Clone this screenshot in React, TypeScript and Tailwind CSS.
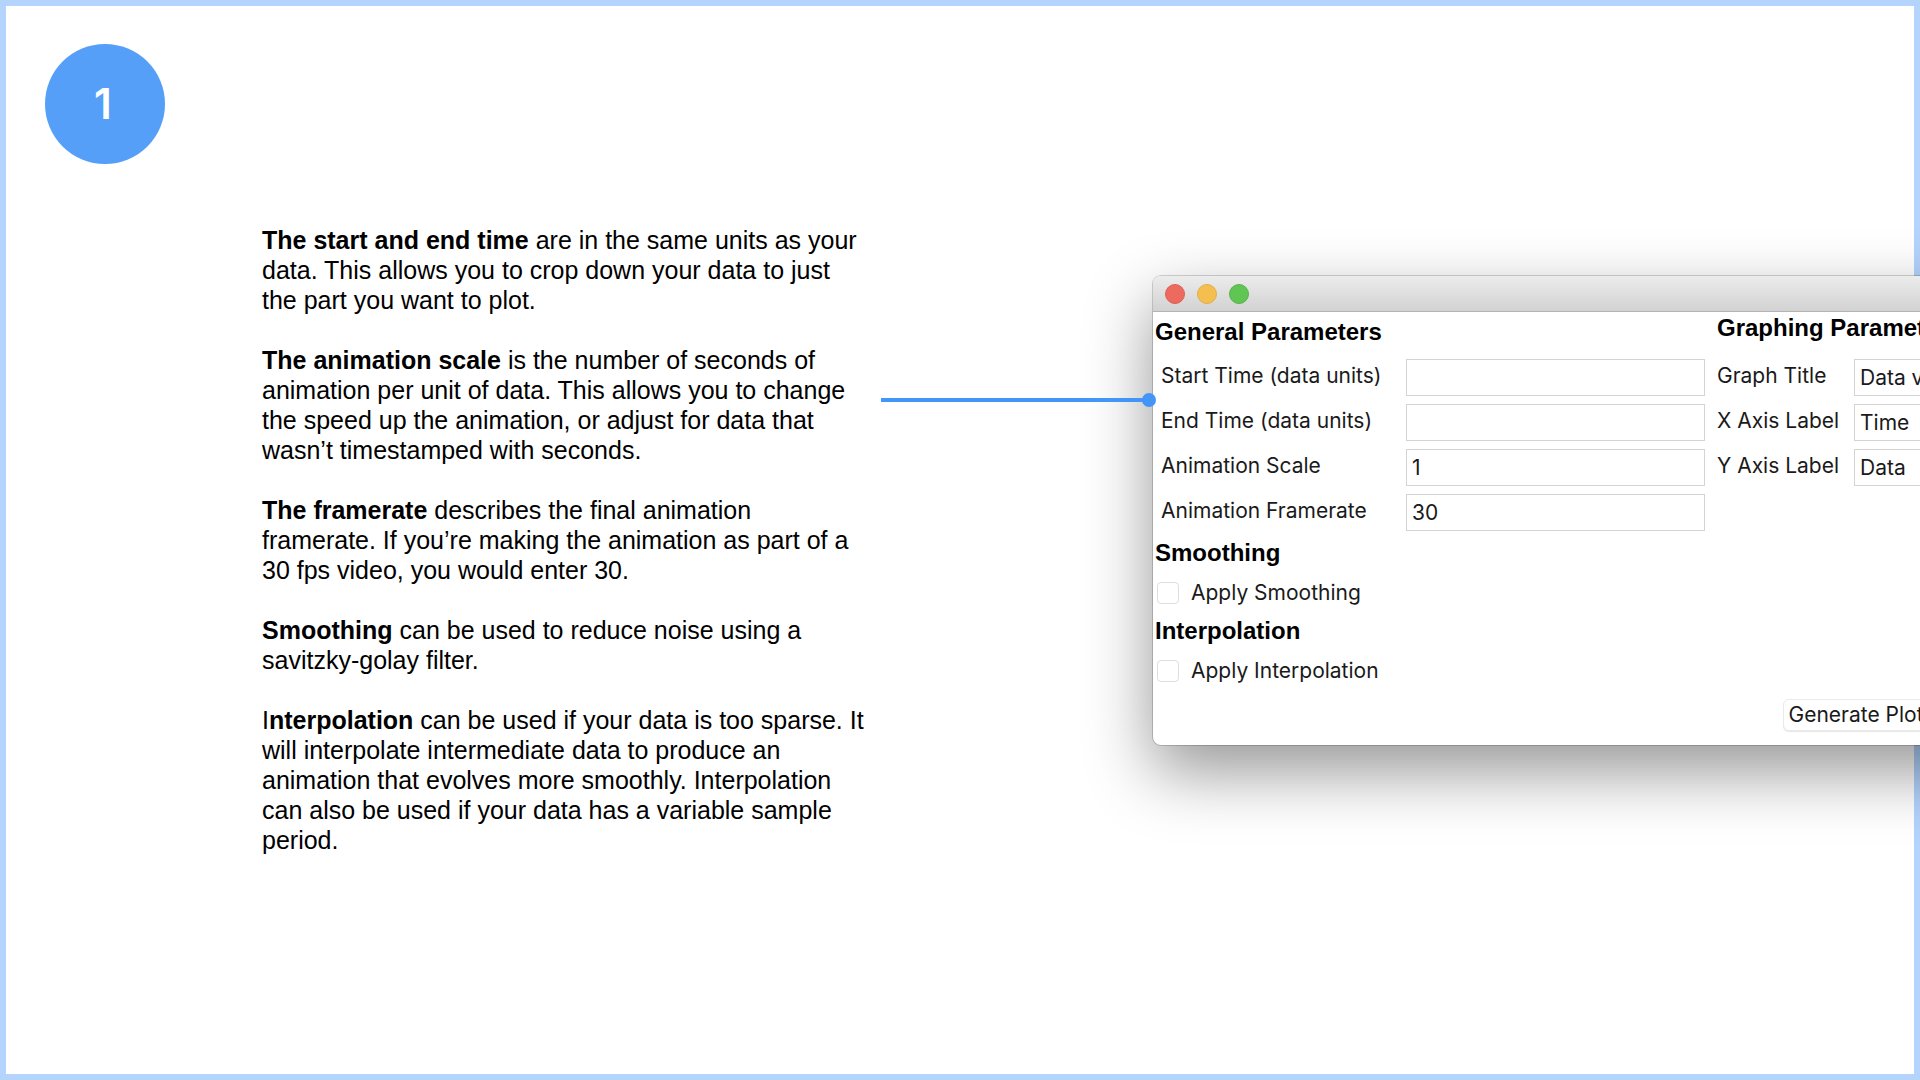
import { useState, type ReactNode } from "react";

const notes: { term: ReactNode; text: string }[] = [
  {
    term: <b>The start and end time</b>,
    text: " are in the same units as your data. This allows you to crop down your data to just the part you want to plot.",
  },
  {
    term: <b>The animation scale</b>,
    text: " is the number of seconds of animation per unit of data. This allows you to change the speed up the animation, or adjust for data that wasn’t timestamped with seconds.",
  },
  {
    term: <b>The framerate</b>,
    text: " describes the final animation framerate. If you’re making the animation as part of a 30 fps video, you would enter 30.",
  },
  {
    term: <b>Smoothing</b>,
    text: " can be used to reduce noise using a savitzky-golay filter.",
  },
  {
    term: (
      <>
        I<b>nterpolation</b>
      </>
    ),
    text: " can be used if your data is too sparse. It will interpolate intermediate data to produce an animation that evolves more smoothly. Interpolation can also be used if your data has a variable sample period.",
  },
];

function Heading({ children }: { children: ReactNode }) {
  return (
    <h2 className="font-['Liberation_Sans',Arial,sans-serif] text-[24px] leading-8 font-bold">
      {children}
    </h2>
  );
}

function Field({ id, label, value = "", labelClass }: { id: string; label: string; value?: string; labelClass: string }) {
  return (
    <div className="flex h-9 items-center">
      <label htmlFor={id} className={`shrink-0 pb-0.5 whitespace-nowrap ${labelClass}`}>
        {label}
      </label>
      <input
        id={id}
        type="text"
        defaultValue={value}
        className="h-[37px] min-w-0 flex-1 border border-[#d4d4d4] bg-white px-[5px] outline-none"
      />
    </div>
  );
}

function Check({ id, label }: { id: string; label: string }) {
  const [on, setOn] = useState(false);
  return (
    <div className="flex h-8 items-center gap-3 pl-0.5">
      <input
        id={id}
        type="checkbox"
        checked={on}
        onChange={(e) => setOn(e.target.checked)}
        className="size-[22px] appearance-none rounded-[4px] border border-[#dedede] bg-white checked:bg-[#4096f8]"
      />
      <label htmlFor={id}>{label}</label>
    </div>
  );
}

function AppWindow() {
  return (
    <section className="w-[1404px] overflow-hidden rounded-lg bg-white font-[Inter,sans-serif] text-[21px] leading-[30px] text-[#1a1a1a] shadow-[0_0_0_1px_rgba(0,0,0,0.17),0_26px_66px_rgba(0,0,0,0.42)]">
      <header className="flex h-9 items-center gap-3 border-b border-[#b4b4b4] bg-linear-to-b from-[#ececec] to-[#d2d2d2] px-3">
        <button aria-label="Close" className="size-5 rounded-full border border-[#dc5f55] bg-[#ec6a5e]" />
        <button aria-label="Minimize" className="size-5 rounded-full border border-[#e0ae48] bg-[#f5bf4f]" />
        <button aria-label="Zoom" className="size-5 rounded-full border border-[#55b448] bg-[#61c554]" />
      </header>
      <div className="pb-3.5 pl-0.5">
        <div className="flex gap-3">
          <div className="w-[550px]">
            <div className="pt-1 text-black">
              <Heading>General Parameters</Heading>
            </div>
            <div className="mt-[11px] flex flex-col gap-[9px] pl-1.5">
              <Field id="start" label="Start Time (data units)" labelClass="w-[245px]" />
              <Field id="end" label="End Time (data units)" labelClass="w-[245px]" />
              <Field id="scale" label="Animation Scale" value="1" labelClass="w-[245px]" />
              <Field id="rate" label="Animation Framerate" value="30" labelClass="w-[245px]" />
            </div>
            <div className="mt-[7px] text-black">
              <Heading>Smoothing</Heading>
            </div>
            <div className="mt-2">
              <Check id="smooth" label="Apply Smoothing" />
            </div>
            <div className="mt-1.5 text-black">
              <Heading>Interpolation</Heading>
            </div>
            <div className="mt-2">
              <Check id="interp" label="Apply Interpolation" />
            </div>
          </div>
          <div className="flex-1 pr-2">
            <div className="text-black">
              <Heading>Graphing Parameters</Heading>
            </div>
            <div className="mt-[15px] flex flex-col gap-[9px]">
              <Field id="title" label="Graph Title" value="Data vs Time" labelClass="w-[137px]" />
              <Field id="xaxis" label="X Axis Label" value="Time" labelClass="w-[137px]" />
              <Field id="yaxis" label="Y Axis Label" value="Data" labelClass="w-[137px]" />
            </div>
          </div>
        </div>
        <div className="mt-3 flex justify-center">
          <button className="h-8 rounded-md border border-[#ebebeb] bg-white px-1 leading-6 shadow-[0_1px_1px_rgba(0,0,0,0.1)]">
            Generate Plot
          </button>
        </div>
      </div>
    </section>
  );
}

export default function App() {
  return (
    <div className="overflow-hidden bg-white">
      <main className="min-h-screen border-[6px] border-[#b4d4fd] font-['Liberation_Sans',Arial,sans-serif] text-black">
        <div className="px-[39px] pt-[38px]">
          <div className="flex size-30 items-center justify-center rounded-full bg-[#559ff9] pr-1 font-[Inter,sans-serif] text-[42px] leading-none font-semibold text-white">
            1
          </div>
        </div>
        <div className="mt-[61px] flex items-start pl-64">
          <article className="flex w-[619px] flex-col gap-[30px] pr-[11px] text-[25px] leading-[30px]">
            {notes.map((n, i) => (
              <p key={i}>
                {n.term}
                {n.text}
              </p>
            ))}
          </article>
          <div className="z-10 mt-[168px] -mr-[3px] flex w-[275px] items-center">
            <span className="h-1 flex-1 bg-[#4396f8]" />
            <span className="-ml-1 size-3.5 rounded-full bg-[#4396f8]" />
          </div>
          <div className="mt-[51px] min-w-0 flex-1">
            <AppWindow />
          </div>
        </div>
      </main>
    </div>
  );
}
